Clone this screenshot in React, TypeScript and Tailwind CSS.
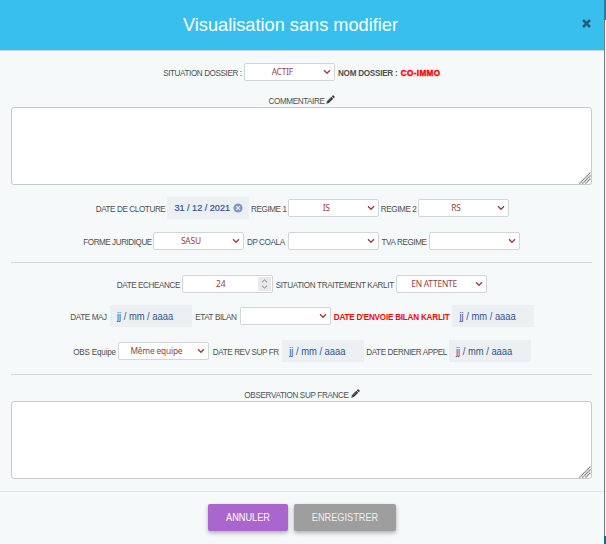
import type { ReactNode } from 'react';

const Chevron = () => (
  <svg className="absolute right-[3px] top-[5px]" width="8" height="6" viewBox="0 0 8 6" fill="none">
    <path d="M1 1.2 4 4.2 7 1.2" stroke="#9b4048" strokeWidth="1.4" />
  </svg>
);

const Label = ({ w, children, className = 'text-[#505050] tracking-[-0.4px]' }: { w: string; children: ReactNode; className?: string }) => (
  <span className={`${w} flex h-[11px] shrink-0 scale-y-[1.14] items-center justify-center whitespace-nowrap pt-[3px] text-[8.15px] ${className}`}>
    {children}
  </span>
);

const Select = ({ value = '' }: { value?: string }) => (
  <div className="relative flex h-[18px] w-[91px] shrink-0 items-center justify-center rounded-[2px] border border-[#d3d6d8] bg-white pr-[15px] pt-px font-['Noto_Sans',sans-serif] text-[8.4px] leading-none tracking-[-0.2px] text-[#9b4048]">
    {value}
    <Chevron />
  </div>
);

const DateBox = ({ value }: { value?: string }) => (
  <div className="flex h-[22px] w-[82px] shrink-0 items-center whitespace-nowrap bg-[#edf0f2] pl-[7px] text-[#2f549b]">
    {value ? (
      <>
        <span className="w-[57px] scale-y-[1.08] pt-[2px] text-[9.1px] [-webkit-text-stroke:0.2px_#2f549b]">{value}</span>
        <svg className="ml-[2px]" width="10" height="10" viewBox="0 0 10 10">
          <circle cx="5" cy="5" r="4.6" fill="#7f99c7" />
          <path d="M3.2 3.2 6.8 6.8M6.8 3.2 3.2 6.8" stroke="#edf0f2" strokeWidth="1.1" />
        </svg>
      </>
    ) : (
      <span className="scale-y-[1.08] pt-px text-[9.4px]">jj / mm / aaaa</span>
    )}
  </div>
);

const Pencil = () => (
  <svg className="mb-px ml-[2px]" width="9" height="9" viewBox="0 0 9 9" fill="#333">
    <path d="M0.3 8.7 0.9 6.2 5.3 1.8 7.2 3.7 2.8 8.1ZM5.8 1.3 6.7 0.4Q7.1 0.1 7.5 0.4L8.6 1.5Q8.9 1.9 8.6 2.3L7.7 3.2Z" />
    <path d="M1.2 7 2 7.8M2 6.5 5.4 3.1" stroke="#b5b8ba" strokeWidth="0.4" />
  </svg>
);

const TextArea = () => (
  <div className="mx-[11px] flex h-[78px] w-[581px] items-end justify-end rounded-[3px] border border-[#c8cacc] bg-white">
    <svg width="12" height="12" viewBox="0 0 12 12" stroke="#666" strokeWidth="1.1" strokeDasharray="1.3 0.4">
      <path d="M0.5 11.5 11.5 0.5M3.5 11.5 11.5 3.5M6.5 11.5 11.5 6.5" />
    </svg>
  </div>
);

const Row = ({ className, children }: { className: string; children: ReactNode }) => (
  <div className={`flex h-[22px] items-center justify-center gap-[2.4px] ${className}`}>{children}</div>
);

export default function App() {
  return (
    <div className="flex h-[544px] w-[606px] overflow-hidden bg-[#f5f9fa] font-['Liberation_Sans',Arial,sans-serif] leading-none">
      <div className="flex w-[604px] flex-col">
        <header className="flex h-[51px] shrink-0 items-center border-b border-[#c5dce5] bg-[#39bfed]">
          <h1 className="ml-[183px] w-[215px] whitespace-nowrap text-[18.2px] text-white">
            Visualisation sans modifier
          </h1>
          <svg className="mb-[3px] ml-[184px]" width="9" height="9" viewBox="0 0 9 9">
            <path d="M1 1 8 8M8 1 1 8" stroke="#1e6077" strokeWidth="2.5" />
          </svg>
        </header>

        <Row className="mt-[10px]">
          <Label w="w-[79px]">SITUATION DOSSIER :</Label>
          <Select value="ACTIF" />
          <Label w="w-[60px]" className="font-bold tracking-[-0.25px] text-[#505050]">NOM DOSSIER :</Label>
          <Label w="w-[41px]" className="font-bold tracking-[0.35px] text-[#ff0505] [-webkit-text-stroke:0.4px_#ff0505]">CO-IMMO</Label>
        </Row>
        <div className="mt-[12px] flex h-[10px] items-center justify-center">
          <Label w="w-[55px]">COMMENTAIRE</Label>
          <Pencil />
        </div>
        <div className="mt-[2px]"><TextArea /></div>

        <Row className="mt-[12px] pl-[1px]">
          <Label w="w-[69px]">DATE DE CLOTURE</Label>
          <DateBox value="31 / 12 / 2021" />
          <Label w="w-[34px]">REGIME 1</Label>
          <Select value="IS" />
          <Label w="w-[34px]">REGIME 2</Label>
          <Select value="RS" />
        </Row>
        <Row className="mt-[11px] pl-[1px]">
          <Label w="w-[66px]" className="tracking-[-0.46px] text-[#505050]">FORME JURIDIQUE</Label>
          <Select value="SASU" />
          <Label w="w-[39px]">DP COALA</Label>
          <Select />
          <Label w="w-[46px]">TVA REGIME</Label>
          <Select />
        </Row>

        <hr className="mx-[11px] mt-[10px] w-[581px] border-[#d0d5d7]" />

        <Row className="mt-[10px]">
          <Label w="w-[63px]">DATE ECHEANCE</Label>
          <div className="flex h-[18px] w-[91px] items-center rounded-[2px] border border-[#d3d6d8] bg-white font-['Noto_Sans',sans-serif] text-[8.5px] text-[#9b4048]">
            <span className="w-[75px] pt-px text-center">24</span>
            <span className="flex h-[14px] w-[13px] items-center justify-center bg-[#e9e9ed]">
              <svg width="7" height="10" viewBox="0 0 7 10" fill="none" stroke="#777" strokeWidth="1">
                <path d="M1 3.3 3.5 0.9 6 3.3M1 6.7 3.5 9.1 6 6.7" />
              </svg>
            </span>
          </div>
          <Label w="w-[118px]" className="tracking-[-0.34px] text-[#505050]">SITUATION TRAITEMENT KARLIT</Label>
          <Select value="EN ATTENTE" />
        </Row>
        <Row className="mt-[10px]">
          <Label w="w-[38px]">DATE MAJ</Label>
          <DateBox />
          <Label w="w-[43px]">ETAT BILAN</Label>
          <Select />
          <Label w="w-[117px]" className="font-bold tracking-[-0.22px] text-[#ff0505]">DATE D'ENVOIE BILAN KARLIT</Label>
          <DateBox />
        </Row>
        <Row className="mt-[13px]">
          <Label w="w-[43px]" className="tracking-[-0.2px] text-[#505050]">OBS Equipe</Label>
          <Select value="Même equipe" />
          <Label w="w-[68px]">DATE REV SUP FR</Label>
          <DateBox />
          <Label w="w-[80px]">DATE DERNIER APPEL</Label>
          <DateBox />
        </Row>

        <hr className="mx-[11px] mt-[12px] w-[581px] border-[#d0d5d7]" />

        <div className="mt-[14px] flex h-[10px] items-center justify-center">
          <Label w="w-[105px]" className="tracking-[-0.34px] text-[#505050]">OBSERVATION SUP FRANCE</Label>
          <Pencil />
        </div>
        <div className="mt-[2px]"><TextArea /></div>

        <footer className="mt-[12px] flex grow items-start justify-center gap-[6px] border-t border-[#dfe5e7] pt-[12px] text-[9.2px] text-white">
          <button className="h-[27px] w-[80px] rounded-[2px] bg-[#aa66cc] pt-[3px] shadow-[0_2px_4px_rgba(0,0,0,0.3)]">
            <span className="inline-block scale-y-[1.1]">ANNULER</span>
          </button>
          <button className="h-[27px] w-[102px] rounded-[2px] bg-[#9e9e9e] pt-[3px] text-[#eee] shadow-[0_2px_4px_rgba(0,0,0,0.3)]">
            <span className="inline-block scale-y-[1.1]">ENREGISTRER</span>
          </button>
        </footer>
      </div>
      <div className="flex w-[2px] flex-col">
        <div className="h-[20px] bg-[#287d9c]" />
        <div className="grow border-l border-[#737b80] bg-[#f5f9fa]" />
        <div className="h-[8px] bg-[#176a88]" />
      </div>
    </div>
  );
}
